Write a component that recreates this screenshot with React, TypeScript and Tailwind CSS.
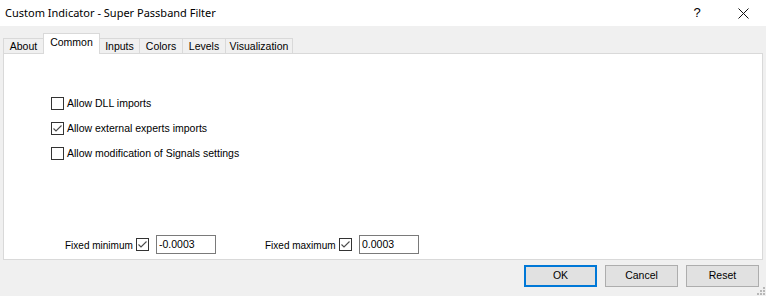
import * as React from "react";

const ui = { fontFamily: '"Liberation Sans", Arial, sans-serif' };

function Check({ checked }: { checked?: boolean }) {
  return (
    <span className="flex h-[13px] w-[13px] shrink-0 items-center justify-center border border-[#333333] bg-white">
      {checked && (
        <svg width="11" height="11" viewBox="0 0 11 11">
          <polyline points="1.5,5.5 4,8 9.5,2.5" fill="none" stroke="#4a4a4a" strokeWidth="1.1" />
        </svg>
      )}
    </span>
  );
}

const tabs = [
  { label: "About", w: "w-[41px] border-l" },
  { label: "Common", w: "w-[57px]" },
  { label: "Inputs", w: "w-[40px]" },
  { label: "Colors", w: "w-[43px]" },
  { label: "Levels", w: "w-[43px]" },
  { label: "Visualization", w: "w-[67px]" },
];

function Tab({ label, w, active }: { label: string; w: string; active?: boolean }) {
  if (active) {
    return (
      <div className={"relative z-10 -ml-px -mb-px flex h-[21px] items-center justify-center border border-b-0 border-[#d9d9d9] bg-white pb-[3px] " + w}>
        {label}
      </div>
    );
  }
  return (
    <div className={"flex h-[15px] items-center justify-center border-t border-r border-[#d9d9d9] bg-[#f0f0f0] pt-px " + w}>
      {label}
    </div>
  );
}

function Button({ label, primary }: { label: string; primary?: boolean }) {
  return (
    <button
      className={
        "flex h-[22px] w-[73px] items-center justify-center bg-[#e1e1e1] text-[10.5px] text-black " +
        (primary ? "border-2 border-[#0078d7]" : "border border-[#adadad]")
      }
    >
      {label}
    </button>
  );
}

export default function App() {
  return (
    <div className="relative flex h-[296px] w-[766px] flex-col overflow-hidden bg-[#f0f0f0] text-[10.5px] text-black" style={ui}>
      <div className="flex h-[26px] shrink-0 items-center justify-between bg-white pl-[5px]">
        <span className="text-[11px]" style={{ fontFamily: '"Noto Sans", "Open Sans", sans-serif' }}>
          Custom Indicator - Super Passband Filter
        </span>
        <div className="flex items-center">
          <span className="w-[46px] text-center text-[13px]">?</span>
          <span className="flex w-[46px] items-center justify-center">
            <svg width="11" height="11" viewBox="0 0 11 11">
              <path d="M0.5 0.5 L10.5 10.5 M10.5 0.5 L0.5 10.5" stroke="#111" strokeWidth="1" />
            </svg>
          </span>
        </div>
      </div>

      <div className="mt-[7px] flex h-[20px] items-end pl-[3px]">
        {tabs.map((t) => (
          <Tab key={t.label} label={t.label} w={t.w} active={t.label === "Common"} />
        ))}
      </div>

      <div className="mx-[3px] flex h-[207px] flex-col border border-[#d9d9d9] bg-white">
        <div className="flex flex-col gap-[9px] pl-[47px] pt-[42px]">
          <label className="flex items-center gap-[3px]">
            <Check />
            <span>Allow DLL imports</span>
          </label>
          <label className="flex items-center gap-[3px]">
            <Check checked />
            <span>Allow external experts imports</span>
          </label>
          <label className="flex items-center gap-[3px]">
            <Check />
            <span>Allow modification of Signals settings</span>
          </label>
        </div>

        <div className="mt-auto mb-[5px] flex items-center pl-[61px]">
          <span className="mt-[2px] w-[71px] shrink-0 whitespace-nowrap text-[10px]">Fixed minimum</span>
          <Check checked />
          <div className="ml-[7px] flex h-[19px] w-[60px] items-center border border-[#7a7a7a] px-[2px]">-0.0003</div>
          <span className="ml-[49px] mt-[2px] w-[74px] shrink-0 whitespace-nowrap text-[10px]">Fixed maximum</span>
          <Check checked />
          <div className="ml-[7px] flex h-[19px] w-[60px] items-center border border-[#7a7a7a] px-[2px]">0.0003</div>
        </div>
      </div>

      <div className="mt-[5px] flex justify-end gap-[8px] pr-[7px]">
        <Button label="OK" primary />
        <Button label="Cancel" />
        <Button label="Reset" />
      </div>

      <svg className="absolute bottom-[1px] right-[1px]" width="8" height="8" viewBox="0 0 8 8">
        <g fill="#b8b8b8">
          <rect x="6" y="0" width="2" height="2" />
          <rect x="3" y="3" width="2" height="2" />
          <rect x="6" y="3" width="2" height="2" />
          <rect x="0" y="6" width="2" height="2" />
          <rect x="3" y="6" width="2" height="2" />
          <rect x="6" y="6" width="2" height="2" />
        </g>
      </svg>
    </div>
  );
}
